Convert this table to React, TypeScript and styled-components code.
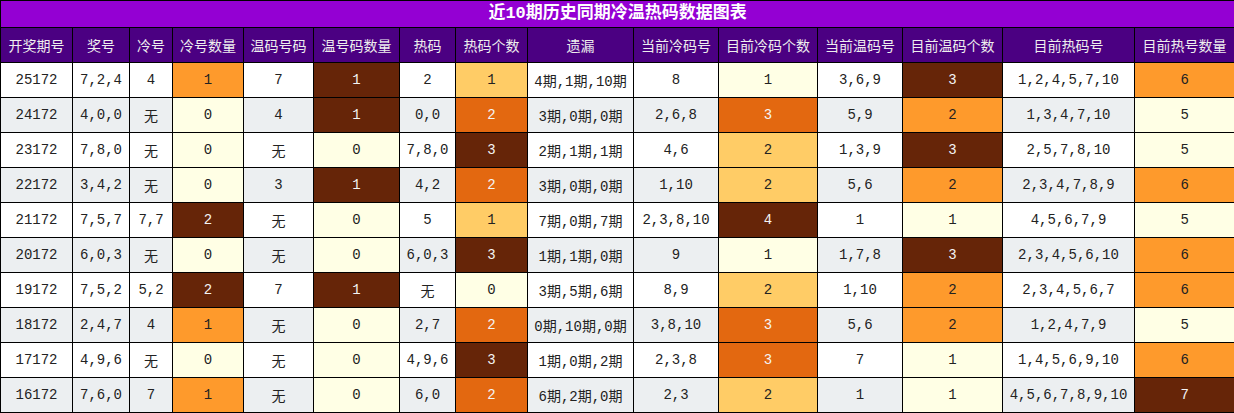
import React from "react";
import styled, { createGlobalStyle } from "styled-components";

const GlobalStyle = createGlobalStyle`
  html, body { margin: 0; padding: 0; background: #ffffff; }
  body { font-family: "Liberation Mono", "Noto Sans CJK SC", monospace; }
`;

type Tone = "W" | "L" | "Y" | "O" | "D" | "B";

const toneBg: Record<Tone, string | null> = {
  W: null,
  L: "#ffffe5",
  Y: "#ffcc66",
  O: "#fe9a2c",
  D: "#e36810",
  B: "#662508",
};

const toneFg: Record<Tone, string> = {
  W: "#222222",
  L: "#222222",
  Y: "#222222",
  O: "#222222",
  D: "#f4f4f4",
  B: "#f4f4f4",
};

const widths = [72, 57, 43, 71, 70, 86, 56, 72, 106, 85, 99, 85, 100, 132, 100];

const headers = [
  "开奖期号", "奖号", "冷号", "冷号数量", "温码号码", "温号码数量", "热码", "热码个数",
  "遗漏", "当前冷码号", "目前冷码个数", "当前温码号", "目前温码个数", "目前热码号", "目前热号数量",
];

type Row = [string, string, string, [string, Tone], string, [string, Tone], string, [string, Tone], string, string, [string, Tone], string, [string, Tone], string, [string, Tone]];

const rows: Row[] = [
  ["25172", "7,2,4", "4", ["1", "O"], "7", ["1", "B"], "2", ["1", "Y"], "4期,1期,10期", "8", ["1", "L"], "3,6,9", ["3", "B"], "1,2,4,5,7,10", ["6", "O"]],
  ["24172", "4,0,0", "无", ["0", "L"], "4", ["1", "B"], "0,0", ["2", "D"], "3期,0期,0期", "2,6,8", ["3", "D"], "5,9", ["2", "O"], "1,3,4,7,10", ["5", "L"]],
  ["23172", "7,8,0", "无", ["0", "L"], "无", ["0", "L"], "7,8,0", ["3", "B"], "2期,1期,1期", "4,6", ["2", "Y"], "1,3,9", ["3", "B"], "2,5,7,8,10", ["5", "L"]],
  ["22172", "3,4,2", "无", ["0", "L"], "3", ["1", "B"], "4,2", ["2", "D"], "3期,0期,0期", "1,10", ["2", "Y"], "5,6", ["2", "O"], "2,3,4,7,8,9", ["6", "O"]],
  ["21172", "7,5,7", "7,7", ["2", "B"], "无", ["0", "L"], "5", ["1", "Y"], "7期,0期,7期", "2,3,8,10", ["4", "B"], "1", ["1", "L"], "4,5,6,7,9", ["5", "L"]],
  ["20172", "6,0,3", "无", ["0", "L"], "无", ["0", "L"], "6,0,3", ["3", "B"], "1期,1期,0期", "9", ["1", "L"], "1,7,8", ["3", "B"], "2,3,4,5,6,10", ["6", "O"]],
  ["19172", "7,5,2", "5,2", ["2", "B"], "7", ["1", "B"], "无", ["0", "L"], "3期,5期,6期", "8,9", ["2", "Y"], "1,10", ["2", "O"], "2,3,4,5,6,7", ["6", "O"]],
  ["18172", "2,4,7", "4", ["1", "O"], "无", ["0", "L"], "2,7", ["2", "D"], "0期,10期,0期", "3,8,10", ["3", "D"], "5,6", ["2", "O"], "1,2,4,7,9", ["5", "L"]],
  ["17172", "4,9,6", "无", ["0", "L"], "无", ["0", "L"], "4,9,6", ["3", "B"], "1期,0期,2期", "2,3,8", ["3", "D"], "7", ["1", "L"], "1,4,5,6,9,10", ["6", "O"]],
  ["16172", "7,6,0", "7", ["1", "O"], "无", ["0", "L"], "6,0", ["2", "D"], "6期,2期,0期", "2,3", ["2", "Y"], "1", ["1", "L"], "4,5,6,7,8,9,10", ["7", "B"]],
];

const Table = styled.table`
  width: 1234px;
  table-layout: fixed;
  border-collapse: collapse;
  font-family: "Liberation Mono", "Noto Sans CJK SC", monospace;
`;

const TitleCell = styled.th`
  height: 26px;
  padding: 0;
  background: #9400d3;
  color: #ffffff;
  border: 1px solid #000000;
  font-family: "Liberation Mono", "Noto Sans CJK SC", monospace;
  font-size: 17px;
  font-weight: bold;
  line-height: 24px;
  text-align: center;
`;

const HeadCell = styled.th`
  height: 34px;
  padding: 0;
  background: #4b0082;
  color: #eeeeee;
  border: 1px solid #000000;
  font-family: "Noto Sans CJK SC", sans-serif;
  font-size: 14px;
  font-weight: normal;
  text-align: center;
  white-space: nowrap;
`;

const BodyRow = styled.tr<{ $alt: boolean }>`
  background: ${(p) => (p.$alt ? "#eceff1" : "#ffffff")};
`;

const Cell = styled.td<{ $tone: Tone }>`
  height: 34px;
  padding: 0;
  border: 1px solid #000000;
  font-size: 14px;
  text-align: center;
  white-space: nowrap;
  color: ${(p) => toneFg[p.$tone]};
  ${(p) => (toneBg[p.$tone] ? `background: ${toneBg[p.$tone]};` : "")}
`;

export default function App() {
  return (
    <>
      <GlobalStyle />
      <Table>
        <colgroup>
          {widths.map((w, i) => (
            <col key={i} style={{ width: w }} />
          ))}
        </colgroup>
        <thead>
          <tr>
            <TitleCell colSpan={15}>近10期历史同期冷温热码数据图表</TitleCell>
          </tr>
          <tr>
            {headers.map((h) => (
              <HeadCell key={h}>{h}</HeadCell>
            ))}
          </tr>
        </thead>
        <tbody>
          {rows.map((r, ri) => (
            <BodyRow key={ri} $alt={ri % 2 === 1}>
              {r.map((c, ci) =>
                Array.isArray(c) ? (
                  <Cell key={ci} $tone={c[1]}>{c[0]}</Cell>
                ) : (
                  <Cell key={ci} $tone="W">{c}</Cell>
                )
              )}
            </BodyRow>
          ))}
        </tbody>
      </Table>
    </>
  );
}
